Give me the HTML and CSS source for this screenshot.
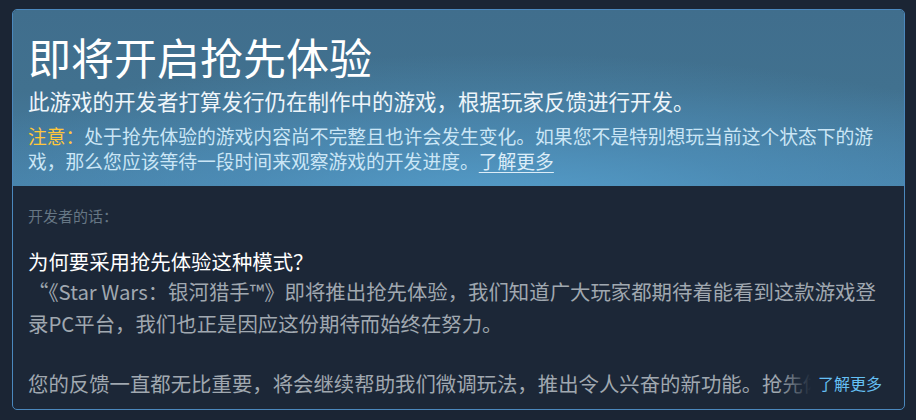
FILE: index.html
```html
<!DOCTYPE html>
<html lang="zh-CN">
<head>
    <meta charset="UTF-8">
    <meta name="viewport" content="width=device-width, initial-scale=1.0">
    <title>抢先体验</title>
    <link rel="stylesheet" href="styles.css">
</head>
<body>
    <div class="ea-box">
        <div class="ea-header">
            <h1 class="ea-title">即将开启抢先体验</h1>
            <div class="ea-sub">此游戏的开发者打算发行仍在制作中的游戏，根据玩家反馈进行开发。</div>
            <div class="ea-notice"><span class="warn">注意：</span>处于抢先体验的游戏内容尚不完整且也许会发生变化。如果您不是特别想玩当前这个状态下的游戏，那么您应该等待一段时间来观察游戏的开发进度。<a href="javascript:void(0);">了解更多</a></div>
        </div>
        <div class="ea-body">
            <div class="dev-label">开发者的话：</div>
            <div class="dev-text">
                <div class="q">为何要采用抢先体验这种模式？</div>
                <p>“《Star Wars：银河猎手™》即将推出抢先体验，我们知道广大玩家都期待着能看到这款游戏登录PC平台，我们也正是因应这份期待而始终在努力。</p>
                <p class="gap">您的反馈一直都无比重要，将会继续帮助我们微调玩法，推出令人兴奋的新功能。抢先体验期间，我们会持续更新内容并倾听大家的意见。</p>
                <div class="more"><a href="javascript:void(0);">了解更多</a></div>
            </div>
        </div>
    </div>
</body>
</html>
```
FILE: styles.css
```css
*{
    margin: 0;
    padding: 0;
}
a{
    text-decoration: none;
}

body{
    background-color: #1b2534;
    font-family: "Noto Sans CJK SC", "Noto Sans", sans-serif;
    padding: 9px 11px 0 12px;
}

.ea-box{
    height: 399px;
    border: 1px solid #4b88bd;
    border-radius: 5px;
    overflow: hidden;
    background-color: #1c2737;
}

/* 顶部蓝色区域 */
.ea-header{
    height: 176px;
    box-sizing: border-box;
    padding: 22px 16px 0 15px;
    background:
        radial-gradient(ellipse 70% 90% at 55% 115%, #559fcc 0%, rgba(80,148,192,0.6) 45%, rgba(65,112,143,0) 100%),
        linear-gradient(180deg, #406e8d 0%, #41718f 45%, #4780a6 100%);
}
.ea-title{
    font-size: 43px;
    font-weight: 400;
    line-height: 48px;
    color: #fff;
}
.ea-sub{
    margin-top: 6px;
    font-size: 21.5px;
    line-height: 30px;
    color: #eef5fa;
}
.ea-notice{
    margin-top: 7px;
    font-size: 18.8px;
    line-height: 25px;
    color: #cbe6f6;
}
.ea-notice .warn{
    color: #ffc73b;
}
.ea-notice a{
    color: #dcedf8;
    text-decoration: underline;
    text-underline-offset: 3px;
}

/* 开发者的话 */
.ea-body{
    padding: 20px 16px 0 15px;
}
.dev-label{
    font-size: 15px;
    line-height: 20px;
    color: #667684;
}
.dev-text{
    position: relative;
    margin-top: 21px;
    height: 152px;
    overflow: hidden;
}
.dev-text .q{
    font-size: 20.4px;
    line-height: 28px;
    color: #fff;
}
.dev-text p{
    font-size: 20.4px;
    line-height: 32px;
    color: #a0a8b0;
}
.dev-text p.gap{
    margin-top: 28px;
}
.more{
    position: absolute;
    right: 6px;
    top: 120px;
    width: 104px;
    height: 32px;
    text-align: right;
    background: linear-gradient(90deg, rgba(28,39,55,0) 0%, #1c2737 32%);
}
.more a{
    font-size: 16px;
    line-height: 32px;
    color: #66c0f4;
}
```
